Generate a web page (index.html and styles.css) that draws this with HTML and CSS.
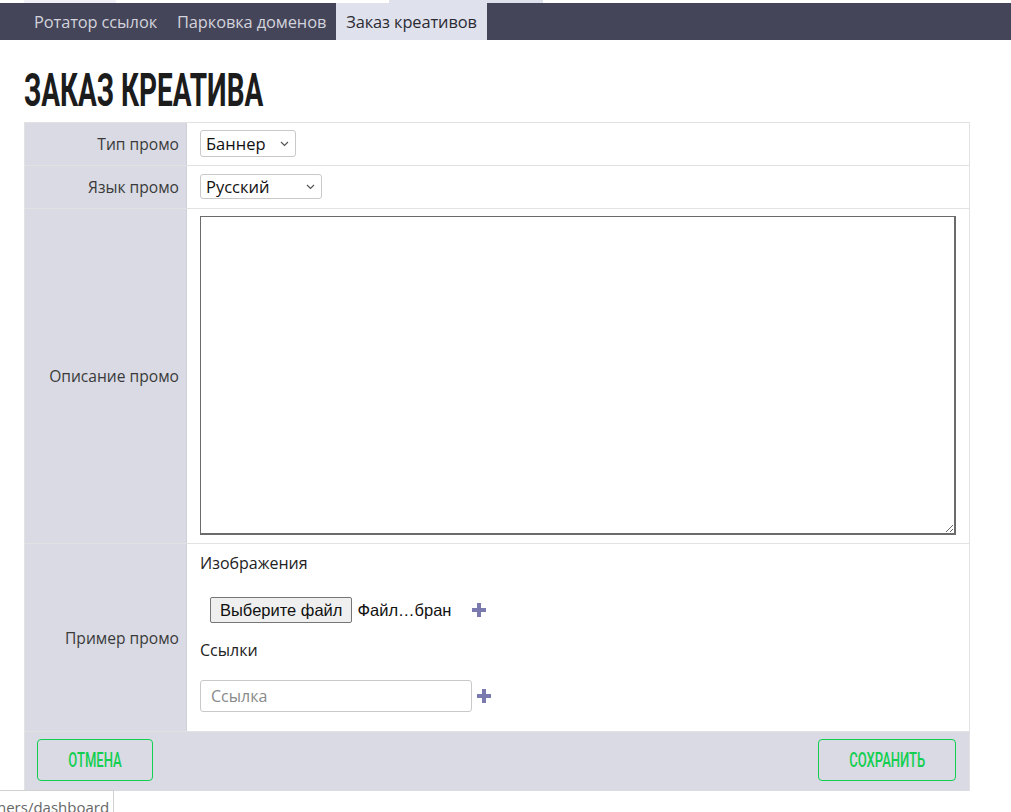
FILE: index.html
```html
<!DOCTYPE html>
<html lang="ru">
<head>
<meta charset="utf-8">
<title>Заказ креатива</title>
<link rel="stylesheet" href="styles.css">
</head>
<body>
<div class="topstrip"><span class="seg seg-a"></span><span class="seg seg-b"></span><span class="seg seg-c"></span></div>
<nav class="tabs">
  <a class="tab" href="#">Ротатор ссылок</a>
  <a class="tab" href="#">Парковка доменов</a>
  <a class="tab active" href="#">Заказ креативов</a>
</nav>
<main class="content">
  <h1 class="title"><span class="title-text">ЗАКАЗ КРЕАТИВА</span></h1>
  <form class="form">
    <div class="row row-sel">
      <label class="lbl">Тип промо</label>
      <div class="val"><select class="sel sel-type"><option>Баннер</option></select></div>
    </div>
    <div class="row row-sel">
      <label class="lbl">Язык промо</label>
      <div class="val"><select class="sel sel-lang"><option>Русский</option></select></div>
    </div>
    <div class="row row-desc">
      <label class="lbl">Описание промо</label>
      <div class="val"><textarea class="area"></textarea></div>
    </div>
    <div class="row row-example">
      <label class="lbl">Пример промо</label>
      <div class="val val-example">
        <div class="sub">Изображения</div>
        <div class="file-line">
          <span class="file-btn">Выберите файл</span>
          <span class="file-name">Файл…бран</span>
          <svg class="plus plus-file" width="14" height="14" viewBox="0 0 14 14"><rect x="5" y="0" width="4" height="14"/><rect x="0" y="5" width="14" height="4"/></svg>
        </div>
        <div class="sub sub-links">Ссылки</div>
        <div class="link-line">
          <input class="link" type="text" placeholder="Ссылка">
          <svg class="plus" width="14" height="14" viewBox="0 0 14 14"><rect x="5" y="0" width="4" height="14"/><rect x="0" y="5" width="14" height="4"/></svg>
        </div>
      </div>
    </div>
    <div class="footer">
      <button type="button" class="btn btn-cancel"><span class="btn-text">ОТМЕНА</span></button>
      <button type="button" class="btn btn-save"><span class="btn-text">СОХРАНИТЬ</span></button>
    </div>
  </form>
</main>
<div class="status">ners/dashboard</div>
</body>
</html>
```
FILE: styles.css
```css
* { box-sizing: border-box; }
html, body { margin: 0; padding: 0; background: #fff; }
body {
  font-family: "Open Sans", "Noto Sans", sans-serif;
  color: #333;
  width: 1011px;
  height: 812px;
  overflow: hidden;
  position: relative;
}
.topstrip { display: flex; height: 3px; }
.seg { display: block; height: 3px; }
.seg-a { margin-left: 24px; width: 92px; background: #f0f0f6; }
.seg-b { width: 273px; background: #fff; }
.seg-c { width: 154px; background: #dfe1ec; }

.tabs {
  display: flex;
  height: 37px;
  background: #444559;
  padding-left: 24px;
}
.tab {
  display: flex;
  align-items: center;
  padding: 0 10px;
  font-size: 16.4px;
  color: #d3d3dc;
  text-decoration: none;
  letter-spacing: -0.1px;
}
.tab.active { background: #dfe1ec; color: #2b2b33; }

.content { padding: 0 41px 0 24px; }
.title {
  margin: 20px 0 0;
  height: 62px;
  line-height: 60px;
  font-family: Roboto, "DejaVu Sans", sans-serif;
  font-weight: 700;
  font-size: 46px;
  color: #1c1c1c;
}
.title-text {
  display: inline-block;
  transform: scaleX(0.607);
  transform-origin: left center;
  white-space: nowrap;
}

.form {
  border: 1px solid #e2e2e2;
  border-bottom: none;
  width: 946px;
}
.row {
  display: grid;
  grid-template-columns: 162px 1fr;
  border-bottom: 1px solid #e2e2e2;
}
.lbl {
  background: #d9dae4;
  border-right: 1px solid #cfd0da;
  display: flex;
  align-items: center;
  justify-content: flex-end;
  padding-right: 7px;
  font-size: 15.6px;
  color: #3a3a3a;
}
.val { padding: 7px 13px 7px 13px; }
.row-sel .val { height: 42px; padding-top: 7px; }
.sel {
  -webkit-appearance: none;
  appearance: none;
  font-family: "Open Sans", sans-serif;
  font-size: 16.5px;
  color: #111;
  height: 27px;
  border: 1px solid #c9c9c9;
  border-radius: 3px;
  background: #fff url("data:image/svg+xml;utf8,<svg xmlns='http://www.w3.org/2000/svg' width='9' height='6' viewBox='0 0 9 6'><path d='M1 1l3.5 3.5L8 1' fill='none' stroke='%23555' stroke-width='1.2'/></svg>") no-repeat right 6px center;
  padding: 0 18px 0 5px;
}
.sel-type { width: 96px; }
.sel-lang { width: 122px; height: 25px; margin-top: 1px; }

.row-desc .val { padding: 7px 13px 8px 13px; height: 334px; }
.area {
  display: block;
  width: 756px;
  height: 319px;
  border: 1px solid #6b6b6b;
  border-right-width: 2px;
  border-bottom-width: 2px;
  resize: both;
  margin: 0;
}

.val-example { padding: 8px 13px 17px 13px; height: 187px; }
.sub { font-size: 16px; color: #222; line-height: 22px; }
.file-line {
  display: flex;
  align-items: center;
  margin: 23px 0 0 10px;
  height: 26px;
  font-family: "Liberation Sans", Arial, sans-serif;
  font-size: 16.5px;
  color: #111;
}
.file-btn {
  display: inline-flex;
  align-items: center;
  height: 26px;
  padding: 0 9px;
  background: #efefef;
  border: 1px solid #767676;
  border-radius: 2px;
}
.file-name { margin-left: 5px; }
.plus { fill: #7b7aaf; display: block; }
.plus-file { margin-left: 21px; }
.sub-links { margin-top: 16px; }
.link-line {
  display: flex;
  align-items: center;
  margin-top: 19px;
  gap: 5px;
}
.link {
  width: 272px;
  height: 32px;
  border: 1px solid #c9c9c9;
  border-radius: 3px;
  padding: 0 10px;
  font-family: "Open Sans", sans-serif;
  font-size: 16px;
}
.link::placeholder { color: #8a8a8a; }

.footer {
  display: flex;
  justify-content: space-between;
  background: #d9dae4;
  padding: 7px 13px 9px 12px;
  height: 59px;
}
.btn {
  height: 42px;
  border: 1px solid #13cf50;
  border-radius: 4px;
  background: transparent;
  color: #13cf50;
  font-family: Roboto, "DejaVu Sans", sans-serif;
  font-weight: 500;
  font-size: 21px;
  padding: 0;
  display: flex;
  align-items: center;
  justify-content: center;
}
.btn-cancel { width: 116px; }
.btn-save { width: 138px; }
.btn-text { display: inline-block; transform: scaleX(0.62); white-space: nowrap; }

.status {
  position: absolute;
  left: 0;
  bottom: 0;
  width: 114px;
  height: 22px;
  background: #fff;
  border: 1px solid #d0d0d0;
  border-left: none;
  border-bottom: none;
  font-family: "Open Sans", sans-serif;
  font-size: 15px;
  color: #666;
  line-height: 22px;
  padding-top: 5px;
  overflow: hidden;
  white-space: nowrap;
  text-indent: -3px;
}
```
